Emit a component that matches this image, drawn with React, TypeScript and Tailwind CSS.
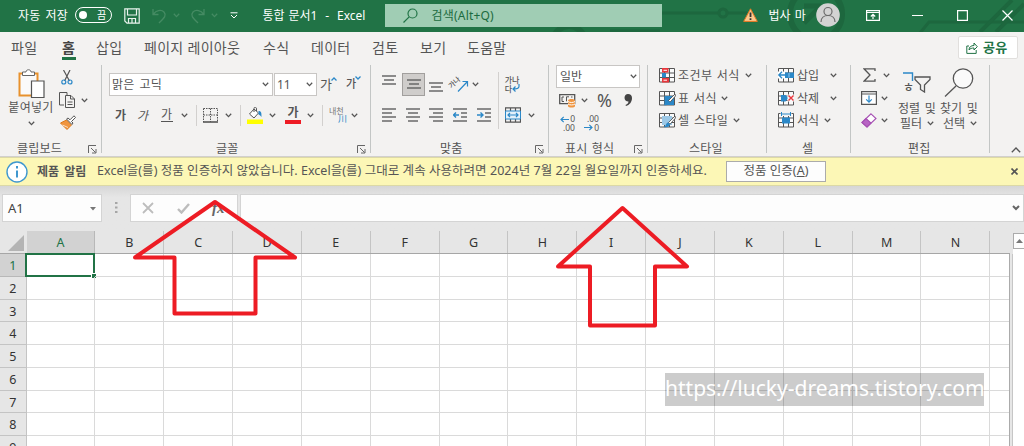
import type { ReactNode } from 'react';

const columns = ['A', 'B', 'C', 'D', 'E', 'F', 'G', 'H', 'I', 'J', 'K', 'L', 'M', 'N'];
const rows = [1, 2, 3, 4, 5, 6, 7, 8, 9];

// Ribbon tabs, each with the width of its slot
const tabs = [
  { label: '파일', slot: 'w-[51px]' },
  { label: '홈', slot: 'w-[34px]', active: true },
  { label: '삽입', slot: 'w-[48px]' },
  { label: '페이지 레이아웃', slot: 'w-[119px]' },
  { label: '수식', slot: 'w-[48px]' },
  { label: '데이터', slot: 'w-[61px]' },
  { label: '검토', slot: 'w-[48px]' },
  { label: '보기', slot: 'w-[47px]' },
  { label: '도움말', slot: 'w-[60px]' },
];

const Chevron = ({ className = '' }: { className?: string }) => (
  <svg viewBox="0 0 7 5" className={`w-[7px] h-[5px] shrink-0 ${className}`} fill="none" stroke="currentColor" strokeWidth="1.3">
    <path d="M.8.8 3.5 3.6 6.2.8" />
  </svg>
);

const Launcher = () => (
  <svg viewBox="0 0 9 9" className="w-[9px] h-[9px]" fill="none" stroke="#666" strokeWidth="1">
    <path d="M.5 8V.5H8M3 3l4.5 4.5M8 4v4H4" />
  </svg>
);

const Divider = ({ className = '' }: { className?: string }) => (
  <div className={`w-px shrink-0 bg-[#d2d0ce] ${className}`} />
);

// One ribbon group: controls on top, caption and dialog launcher below
const Group = ({ label, className, labelClass, launcher, children }: {
  label: string;
  className: string;
  labelClass: string;
  launcher?: boolean;
  children: ReactNode;
}) => (
  <div className={`flex flex-col shrink-0 h-full ${className}`}>
    <div className="flex h-[79px]">{children}</div>
    <div className="flex items-center h-[17px]">
      <div className={`flex-1 pt-[2px] text-[12px] leading-[17px] tracking-[0.2px] ${labelClass}`}>{label}</div>
      {launcher && <div className="w-[13px] pt-1"><Launcher /></div>}
    </div>
  </div>
);

const GroupEdge = () => <div className="w-px h-[88px] mt-[5px] shrink-0 bg-[#c3c6c5]" />;

const Lines = ({ kind }: { kind: 'left' | 'center' | 'right' | 'top' | 'middle' | 'bottom' }) => {
  const paths = {
    left: 'M0 1h14M0 5h10M0 9h14M0 13h10',
    center: 'M0 1h14M2 5h10M0 9h14M2 13h10',
    right: 'M0 1h14M4 5h10M0 9h14M4 13h10',
    top: 'M0 -1h14M2 3h10M0 7h14',
    middle: 'M0 3h14M2 7h10M0 11h14',
    bottom: 'M0 6h14M2 10h10M0 14h14',
  };
  return (
    <svg viewBox="0 0 14 14" className="w-[14px] h-[14px] overflow-visible" fill="none" stroke="#6a6a6a" strokeWidth="1.4">
      <path d={paths[kind]} />
    </svg>
  );
};

const Indent = ({ flip }: { flip?: boolean }) => (
  <svg viewBox="0 0 14 14" className="w-[14px] h-[14px]" fill="none" stroke="#6a6a6a" strokeWidth="1.4">
    <path d="M0 1h14M8 5h6M8 9h6M0 13h14" />
    <path d={flip ? 'M0 7h5.5M3.5 4.5 6 7 3.5 9.5' : 'M6 7H.8M3 4.5.5 7 3 9.5'} stroke="#2b88c8" />
  </svg>
);

const TableIcon = ({ kind }: { kind: 'cond' | 'table' | 'cell' | 'insert' | 'delete' | 'format' }) => (
  <svg viewBox="0 0 16 15" className="w-4 h-[15px] overflow-visible" fill="none">
    <path d="M.5.5h15v13.5H.5zM.5 5h15M.5 9.5h15M5.5.5V14M10.5.5V14" stroke="#555" fill="#fafafa" />
    {kind === 'cond' && (
      <>
        <path d="M3 0h6.5v4.5H3zM3 10h7v4.5H3z" fill="#e8383d" />
        <path d="M3 5h4v4.5H3z" fill="#2b88c8" />
        <path d="M4.5 2.3h3.5M4.5 12.2h3.5" stroke="#fff" />
      </>
    )}
    {(kind === 'table' || kind === 'cell') && (
      <>
        <path d={kind === 'table' ? 'M5.5 5H15v9H5.5z' : 'M3 3h10v9H3z'} fill={kind === 'table' ? '#2b88c8' : '#9cc8e6'} />
        <path d="M16 3 9.5 9.5l1.5 1.7L16.5 5z" fill="#fff" stroke="#444" strokeWidth=".8" />
        <path d="M9 9.5c-2 .3-1.5 3-4.5 4.5 3.5 1 6.5-.5 6.5-3z" fill="#2b88c8" />
      </>
    )}
    {kind === 'insert' && (
      <>
        <path d="M4 4.5h12v5.5H4z" fill="#2b88c8" />
        <path d="M11 5v4.5" stroke="#8ec3ea" />
        <path d="M0 3.5h7v7H0z" fill="#fff" />
        <path d="M8 7H1M4 3.8.8 7 4 10.2" stroke="#2b88c8" strokeWidth="1.3" />
      </>
    )}
    {kind === 'delete' && (
      <>
        <path d="M3 4h4.500L10.500 7.200 7.500 10.500H3z" fill="#2b88c8" />
        <path d="M9.5 3.5H16v7H9.5z" fill="#f8f8f8" />
        <path d="m10.5 4.500 5 5M15.500 4.500l-5 5" stroke="#e8383d" strokeWidth="1.4" />
      </>
    )}
    {kind === 'format' && (
      <>
        <path d="M2.500-1h11v4h-11z" fill="#f3f2f1" />
        <path d="M3.500 1h9M3.500-1v4M12.500-1v4" stroke="#2b88c8" />
        <path d="M4 4.500h8v6H4z" fill="#2b88c8" />
      </>
    )}
  </svg>
);

const TitleBar = () => (
  <header className="relative flex items-start h-8 bg-[#217346] text-white text-[12px] overflow-hidden">
    {/* circuit decoration */}
    <svg className="absolute inset-0 w-[1024px] h-8" fill="none" stroke="#1d673e" strokeWidth="3">
      <circle cx="569" cy="42" r="16" strokeWidth="6" />
      <path d="M610 31h50M662 13h58M727 13h20" />
      <circle cx="723" cy="13" r="4" />
      <circle cx="816" cy="14" r="26" strokeWidth="6" />
      <path d="M804 6h17M821 6l-17 17" strokeWidth="5" />
      <path d="M920 33l9-11h95" />
      <path d="m980 32 32-32M996 32l28-28" strokeWidth="4" />
    </svg>
    <div className="relative flex items-center h-[30px]">
      <div className="w-[57px] ml-[18px] pt-px tracking-[0.1px] [word-spacing:2px]">자동 저장</div>
      <div className="flex items-center w-[37px] h-[16px] -mt-px rounded-full border border-white pl-[3px]">
        <div className="w-2 h-2 rounded-full bg-white" />
        <div className="ml-[10px] text-[10px] leading-none">끔</div>
      </div>
      <svg viewBox="0 0 16 16" className="w-4 h-4 ml-3 mt-[2px]" fill="none" stroke="#e9f3ed" strokeWidth="1.2">
        <path d="M.8.8h14.400v14.400H3L.8 13zM3.500 1v6h9V1M4.500 15v-4.500h7V15M8 11v4" />
      </svg>
      <svg viewBox="0 0 15 16" className="w-[15px] h-4 ml-3 mt-[2px]" fill="none" stroke="#458b63" strokeWidth="1.3">
        <path d="M1 1v5.500h5.500M1.500 6C4 2.500 9 1 12 4c3 3.500 0 6-5 11" />
      </svg>
      <Chevron className="ml-[6px] text-[#458b63]" />
      <svg viewBox="0 0 15 16" className="w-[15px] h-4 ml-[10px] mt-[2px]" fill="none" stroke="#458b63" strokeWidth="1.3">
        <path d="M14 1v5.500H8.500M13.500 6C11 2.500 6 1 3 4c-3 3.500 0 6 5 11" />
      </svg>
      <Chevron className="ml-[6px] text-[#458b63]" />
      <svg viewBox="0 0 8 7" className="w-2 h-[7px] ml-[12px]" fill="none" stroke="#fff">
        <path d="M.5.8h7M1 3l3 3 3-3" />
      </svg>
      <div className="w-[122px] ml-[24.500px] pt-px whitespace-pre [word-spacing:0.8px]">통합 문서1  -  Excel</div>
    </div>
    <div className="relative flex items-center w-[277px] h-[23px] mt-[4px] shrink-0 bg-[#a0cdb4] text-[#1c6b40]">
      <svg viewBox="0 0 15 15" className="w-[15px] h-[15px] ml-[18px]" fill="none" stroke="#217346" strokeWidth="1.2">
        <circle cx="9.500" cy="5.500" r="4.500" />
        <path d="M6.200 8.800.5 14.500" />
      </svg>
      <div className="ml-[14px] tracking-[0.2px]">검색(Alt+Q)</div>
    </div>
    <div className="relative flex items-center h-[30px]">
      <svg viewBox="0 0 15 14" className="w-[15px] h-[14px] ml-[81px]">
        <path d="M7.500.8 14.300 13.400H.7z" fill="#fbc98d" stroke="#e87722" />
        <path d="M7.500 4.500v4.500M7.500 10.300v1.700" stroke="#333" strokeWidth="1.800" />
      </svg>
      <div className="w-12 ml-[11px] pt-px [word-spacing:1px]">법사 마</div>
      <svg viewBox="0 0 24 24" className="w-6 h-6 -ml-px shrink-0" fill="none" stroke="#6b6b6b" strokeWidth="1.200">
        <circle cx="12" cy="12" r="11.800" fill="#d3d3d3" stroke="none" />
        <circle cx="12" cy="8.500" r="4" />
        <path d="M5 19c0-4 3-6.500 7-6.500s7 2.500 7 6.500" />
      </svg>
      <svg viewBox="0 0 14 11" className="w-[14px] h-[11px] ml-[26px] shrink-0" fill="none" stroke="#fff" strokeWidth="1.200">
        <path d="M.6.6h12.800v9.800H.6zM.6 2.500h12.800M7 9V4.500M4.800 6.500 7 4.300l2.200 2.200" />
      </svg>
      <svg viewBox="0 0 11 11" className="w-[11px] h-[11px] ml-[32px] shrink-0" stroke="#fff"><path d="M0 5.500h11" /></svg>
      <svg viewBox="0 0 11 11" className="w-[11px] h-[11px] ml-[34px] shrink-0" fill="none" stroke="#fff" strokeWidth="1.200"><path d="M.6.6h9.800v9.800H.6z" /></svg>
      <svg viewBox="0 0 11 11" className="w-[11px] h-[11px] ml-[34px] shrink-0" stroke="#fff" strokeWidth="1.200"><path d="m.5.5 10 10M10.500.5l-10 10" /></svg>
    </div>
  </header>
);

const TabRow = () => (
  <nav className="flex h-7 pl-[11px] text-[14px] text-[#555] tracking-[0.3px]">
    {tabs.map((tab) => (
      <div key={tab.label} className={`shrink-0 ${tab.slot}`}>
        <div className={tab.active ? 'w-[14px] h-7 border-b-3 border-[#217346] font-bold text-[#444] leading-[31px] whitespace-nowrap' : 'leading-[31px] whitespace-nowrap'}>
          {tab.label}
        </div>
      </div>
    ))}
    <div className="flex items-center ml-auto mr-[6px] mt-[4px] w-[60px] h-[23px] pl-[7px] bg-white border border-[#e1dfdd] rounded-xs text-[#217346] font-bold text-[13px]">
      <svg viewBox="0 0 12 12" className="w-3 h-3 mr-[5px] shrink-0" fill="none" stroke="#217346">
        <path d="M3 4H.8v7.400h9.400V8M3 8c0-3 2-4.500 5-4.500V1l3.300 3.700L8 8V6C6 6 4 6.500 3 8z" />
      </svg>
      공유
    </div>
  </nav>
);

const Clipboard = () => (
  <Group label="클립보드" className="w-[101px]" labelClass="pl-[17px]" launcher>
    <div className="flex flex-col items-center w-[52px] ml-[5px] pt-[9px]">
      <svg viewBox="0 0 27 29" className="w-[27px] h-[29px] shrink-0" fill="none">
        <path d="M1.500 4.500h18v22H1.500z" fill="#fafafa" stroke="#e8912d" strokeWidth="2" />
        <path d="M4.500 6.500V3h3.500c0-3 5-3 5 0h3.500v3.500z" fill="#fff" stroke="#666" />
        <path d="M13.500 12h12.500v16.500H13.500z" fill="#fff" stroke="#555" strokeWidth="1.200" />
      </svg>
      <div className="mt-px text-[12px] leading-[18px] tracking-[0.3px] whitespace-nowrap">붙여넣기</div>
      <Chevron className="mt-[4px]" />
    </div>
    <div className="flex flex-col pt-[10px] ml-[4px]">
      <svg viewBox="0 0 12 15" className="w-3 h-[15px]" fill="none">
        <path d="M2.500 0 8.500 11M9 0 3.500 11" stroke="#555" strokeWidth="1.200" />
        <circle cx="2.800" cy="12" r="2" stroke="#2b88c8" strokeWidth="1.200" />
        <circle cx="9" cy="12" r="2" stroke="#2b88c8" strokeWidth="1.200" />
      </svg>
      <div className="flex items-center mt-[7px]">
        <svg viewBox="0 0 16 16" className="w-4 h-4 -ml-[2px]" fill="none" stroke="#555">
          <path d="M5 13H.5V.5H8V3M6.500 3.500h5.500l3.500 3.500v8.500h-9zM11.500 3.500V7h4M8.500 10h5M8.500 12.500h5" />
        </svg>
        <Chevron className="ml-[6px]" />
      </div>
      <svg viewBox="0 0 16 15" className="w-4 h-[15px] mt-[7px] -ml-px" fill="none">
        <path d="m.5 8 6-3 5 5L7 14.500z" fill="#f0953f" stroke="#dd7a1a" />
        <path d="M2.500 10 8 12.500" stroke="#fff" strokeWidth=".7" />
        <path d="m6.500 4 5.500 5.500 1-1.500-1.500-1.500 4-4L14 .8l-4 4L8 3z" fill="#fff" stroke="#555" />
      </svg>
    </div>
  </Group>
);

const FontGroup = () => (
  <Group label="글꼴" className="w-[268px]" labelClass="pl-[114px]" launcher>
    <div className="flex flex-col pl-[7px]">
      <div className="flex items-center h-6 mt-3">
        <div className="flex items-center w-[164px] h-[23px] pl-[2px] pr-[3px] pt-px bg-white border border-[#c8c6c4] text-[12px] tracking-[0.1px] [word-spacing:2px]">
          맑은 고딕
          <Chevron className="ml-auto" />
        </div>
        <div className="flex items-center w-[43px] h-[23px] ml-px pl-[2px] pr-[3px] pt-px bg-white border border-[#c8c6c4] text-[12px]">
          11
          <Chevron className="ml-auto" />
        </div>
        <div className="flex w-[26px] ml-[3px] text-[13px] leading-[18px]">
          가
          <svg viewBox="0 0 6 4" className="w-[6px] h-1 mt-[2px] -ml-[1px]" fill="none" stroke="#2b88c8" strokeWidth="1.300"><path d="m.5 3.500 2.500-2.500 2.500 2.500" /></svg>
        </div>
        <div className="flex text-[11px] font-medium leading-[20px]">
          가
          <svg viewBox="0 0 6 4" className="w-[6px] h-1 mt-[2px] -ml-[1px]" fill="none" stroke="#2b88c8" strokeWidth="1.300"><path d="m.5.5 2.500 2.500 2.500-2.500" /></svg>
        </div>
      </div>
      <div className="flex items-center h-[22px] mt-2 text-[12px] leading-[15px]">
        <div className="w-[22px] ml-[6px] font-bold">가</div>
        <div className="w-[24px] italic">가</div>
        <div className="w-[12px] border-b border-[#555] leading-[13px]">가</div>
        <Chevron className="ml-[8px]" />
        <Divider className="h-[21px] ml-[8px]" />
        <svg viewBox="0 0 15 15" className="w-[15px] h-[15px] ml-[6px]" fill="none" stroke="#555">
          <path d="M.5.5h14v13.500M.5.5V14M7.500.5V14M.5 7h14" strokeDasharray="1.500 1" />
          <path d="M0 14h15" strokeWidth="1.600" />
        </svg>
        <Chevron className="ml-[7px]" />
        <Divider className="h-[21px] ml-[8px]" />
        <svg viewBox="0 0 16 17" className="w-4 h-[17px] ml-[6px]" fill="none">
          <path d="M7 2 2.500 7l4.500 4L11.500 6zM7 5V1.500C7-.3 9.500-.3 9.500 2v2" stroke="#555" fill="#fff" />
          <path d="M11.500 4c3 0 3 2 3 6-1-1-1.500-2-3-2.500z" fill="#2b88c8" />
          <path d="M0 12.500h16V17H0z" fill="#ff0" />
        </svg>
        <Chevron className="ml-[6px]" />
        <div className="flex flex-col items-center w-4 ml-[9px]">
          <div className="text-[12px] leading-[12px] font-bold">가</div>
          <div className="w-4 h-1 mt-px bg-[#ee1c25]" />
        </div>
        <Chevron className="ml-[6px]" />
        <Divider className="h-[21px] ml-[8px]" />
        <div className="flex flex-col w-[18px] ml-[6px]">
          <div className="text-[8px] leading-[8px] text-[#777] whitespace-nowrap">내천</div>
          <div className="text-[9px] leading-[8px] text-[#2b88c8] self-end">川</div>
        </div>
        <Chevron className="ml-[4px]" />
      </div>
    </div>
  </Group>
);

const AlignGroup = () => (
  <Group label="맞춤" className="w-[177px]" labelClass="pl-[69px]" launcher>
    <div className="flex flex-col pl-[11px]">
      <div className="flex items-center h-6 mt-3">
        <Lines kind="top" />
        <div className="flex items-center justify-center w-[23px] h-[23px] ml-[6px] bg-[#cfcdcb] border border-[#a19f9d]"><div className="-mt-[1px]"><Lines kind="middle" /></div></div>
        <div className="ml-[4px]"><Lines kind="bottom" /></div>
        <svg viewBox="0 0 17 17" className="w-[17px] h-[17px] ml-[9px] overflow-visible" fill="none">
          <text x="-1" y="12" fontSize="7" fontWeight="500" fill="#555" transform="rotate(-42 0 12)">가나</text>
          <path d="M6 15.500 15 6M10.500 5.500H15.500V10.500" stroke="#2b88c8" strokeWidth="1.200" />
        </svg>
        <Chevron className="ml-[3px]" />
      </div>
      <div className="flex items-center h-[22px] mt-2 gap-[9.700px]">
        <Lines kind="left" />
        <Lines kind="center" />
        <Lines kind="right" />
        <Indent />
        <Indent flip />
      </div>
    </div>
    <Divider className="h-[57px] mt-3 ml-[7px]" />
    <div className="flex flex-col ml-[6px] pt-[15px]">
      <div className="w-[17px] h-[18px] text-[8px] leading-[9px] font-medium">
        <div className="whitespace-nowrap">가나</div>
        <div className="flex">
          다
          <svg viewBox="0 0 8 8" className="w-2 h-2" fill="none" stroke="#2b88c8" strokeWidth="1.200"><path d="M7 0v2.500Q7 5 1 5M3.500 2.500 1 5l2.500 2.500" /></svg>
        </div>
      </div>
      <div className="flex items-center mt-[14px]">
        <svg viewBox="0 0 16 16" className="w-4 h-4" fill="none">
          <path d="M.5.8h15v14.400H.5zM5.500 1v3M10.500 1v3M5.500 12v3M10.500 12v3" stroke="#555" strokeWidth="1.200" />
          <path d="M.5 4h15v8H.5z" fill="#e4f1fa" stroke="#2b88c8" />
          <path d="M3 8h10M5 6 3 8l2 2M11 6l2 2-2 2" stroke="#2b88c8" strokeWidth="1.200" />
        </svg>
        <Chevron className="ml-[7px]" />
      </div>
    </div>
  </Group>
);

const NumberGroup = () => (
  <Group label="표시 형식" className="w-[98px]" labelClass="pl-[16px] [word-spacing:1px]" launcher>
    <div className="flex flex-col pl-[7px]">
      <div className="flex items-center w-[84px] h-[23px] mt-[5px] pl-[3px] pr-[2px] bg-white border border-[#c8c6c4] text-[12px]">
        일반
        <Chevron className="ml-auto" />
      </div>
      <div className="flex items-center h-6 pl-[3px]">
        <svg viewBox="0 0 17 15" className="w-[17px] h-[15px]" fill="none">
          <path d="M.7 1.700h15v9H.7z" stroke="#555" strokeWidth="1.300" />
          <path d="M5 4H3v4.500h2M10 3.800H7.500v4.500M12 4h1.500" stroke="#555" />
          <path d="M9 7.500c0-2 7-2 7 0v5.500c0 2-7 2-7 0z" fill="#f0953f" />
          <path d="M9 8.500c1.500 1.300 5.500 1.300 7 0M9 11c1.500 1.300 5.500 1.300 7 0" stroke="#fff" />
        </svg>
        <Chevron className="ml-[5px]" />
        <div className="w-[27px] ml-[9px] text-[18px] leading-6 font-['Noto_Sans']">%</div>
        <svg viewBox="0 0 8 12" className="w-2 h-3" fill="#444"><path d="M4 0c2.500 0 4 1.500 4 4 0 4-2.500 7-6 8l-.5-1c2-1 3-2 3-3.500C2 7.500.5 6 .5 3.800.5 1.500 2 0 4 0z" /></svg>
      </div>
      <div className="flex h-[22px] pl-[3px] pt-[3px] text-[8.500px] leading-[8.500px] font-['Noto_Sans']">
        <div className="flex flex-col items-end w-4 mr-[8px]">
          <div className="flex items-center h-[8.500px]">
            <svg viewBox="0 0 10 7" className="w-[10px] h-[7px]" fill="none" stroke="#2b88c8" strokeWidth="1.200"><path d="M9 3.500H1M3.700.8 1 3.500l2.700 2.700" /></svg>0
          </div>
          <div>.00</div>
        </div>
        <div className="flex flex-col items-end w-4">
          <div>.00</div>
          <div className="flex items-center h-[8.500px]">
            <svg viewBox="0 0 10 7" className="w-[10px] h-[7px]" fill="none" stroke="#2b88c8" strokeWidth="1.200"><path d="M0 3.500h8M5.300.8 8 3.500 5.300 6.200" /></svg>0
          </div>
        </div>
      </div>
    </div>
  </Group>
);

const styleItems = [
  { label: '조건부 서식', kind: 'cond', slot: 'w-[67px]' },
  { label: '표 서식', kind: 'table', slot: 'w-[43px]' },
  { label: '셀 스타일', kind: 'cell', slot: 'w-[55px]' },
] as const;

const cellItems = [
  { label: '삽입', kind: 'insert', slot: 'w-[33px]' },
  { label: '삭제', kind: 'delete', slot: 'w-[33px]' },
  { label: '서식', kind: 'format', slot: 'w-[27px]' },
] as const;

const EditGroup = () => (
  <Group label="편집" className="w-[138px]" labelClass="pl-[57px]">
    <div className="flex flex-col pt-1 pl-[10px] w-[46px]">
      <div className="flex items-center h-[22.700px]">
        <svg viewBox="0 0 13 14" className="w-[13px] h-[14px] ml-[2px]" fill="none" stroke="#555" strokeWidth="1.300"><path d="M12 3V.8H1l6 6.200-6 6.200h11V11" /></svg>
        <Chevron className="ml-[7px]" />
      </div>
      <div className="flex items-center h-[22.700px]">
        <svg viewBox="0 0 16 14" className="w-4 h-[14px]" fill="none"><path d="M.6.6h14.800v12.800H.6zM.6 3h14.800" stroke="#555" strokeWidth="1.200" fill="#fff" /><path d="M8 4.500V11M5.200 8.300 8 11.100l2.800-2.800" stroke="#2b88c8" strokeWidth="1.200" /></svg>
        <Chevron className="ml-[4px]" />
      </div>
      <div className="flex items-center h-[22.700px]">
        <svg viewBox="0 0 16 15" className="w-4 h-[15px]" fill="#fff" stroke="#a64fb3" strokeWidth="1.100"><path d="M10 .8 15 5.500 6 14 1 9.500z" /><path d="M5 5.500 1 9.500 6 14l4-4z" fill="#b865c4" /></svg>
        <Chevron className="ml-[4px]" />
      </div>
    </div>
    <div className="flex flex-col w-[43px] pl-px pt-[12px] text-[12px] leading-[15px]">
      <div className="flex h-[29px] pl-[5px]">
        <div className="flex flex-col w-[11px] h-[22px] text-[12px] leading-[12px]">
          <svg viewBox="0 0 11 9" className="w-[11px] h-[9px] shrink-0" fill="none" stroke="#2b88c8" strokeWidth="1.400"><path d="M0 1h9.500v8" /></svg>
          <div className="mt-px font-medium">ㅎ</div>
        </div>
        <svg viewBox="0 0 17 17" className="w-[17px] h-[17px] mt-[4px]" fill="none" stroke="#555" strokeWidth="1.300"><path d="M1 1h15v2.500L10.500 9v7l-4-2.500V9L1 3.500z" /></svg>
      </div>
      <div className="whitespace-nowrap [word-spacing:1.500px]">정렬 및</div>
      <div className="flex items-center pl-[2px]">필터<Chevron className="ml-[5px]" /></div>
    </div>
    <div className="flex flex-col pt-[8px] w-[44px] text-[12px] leading-[15px]">
      <svg viewBox="0 0 30 30" className="w-[30px] h-[30px] ml-[4px] mb-[3px]" fill="none" stroke="#555" strokeWidth="1.300"><circle cx="19" cy="10.500" r="9.700" fill="#fafafa" /><path d="M12 18 1 28.500" /></svg>
      <div className="whitespace-nowrap [word-spacing:1.500px]">찾기 및</div>
      <div className="flex items-center pl-[3px]">선택<Chevron className="ml-[5px]" /></div>
    </div>
  </Group>
);

const Ribbon = () => (
  <div className="flex h-[97px] border-b border-[#d2d0ce] text-[#555]">
    <Clipboard />
    <GroupEdge />
    <FontGroup />
    <GroupEdge />
    <AlignGroup />
    <GroupEdge />
    <NumberGroup />
    <GroupEdge />
    <Group label="스타일" className="w-[118px]" labelClass="pl-[41px]">
      <div className="flex flex-col pt-1 pl-[11px]">
        {styleItems.map((item) => (
          <div key={item.label} className="flex items-center h-[22.700px] text-[12px]">
            <TableIcon kind={item.kind} />
            <div className={`ml-[3px] pt-px whitespace-nowrap tracking-[0.4px] [word-spacing:1px] ${item.slot}`}>{item.label}</div>
            <Chevron />
          </div>
        ))}
      </div>
    </Group>
    <GroupEdge />
    <Group label="셀" className="w-[83px]" labelClass="pl-[35px]">
      <div className="flex flex-col pt-1 pl-[11px]">
        {cellItems.map((item) => (
          <div key={item.label} className="flex items-center h-[22.700px] text-[12px]">
            <TableIcon kind={item.kind} />
            <div className={`ml-[3px] pt-px whitespace-nowrap ${item.slot}`}>{item.label}</div>
            <Chevron />
          </div>
        ))}
      </div>
    </Group>
    <GroupEdge />
    <EditGroup />
    <GroupEdge />
    <svg viewBox="0 0 10 6" className="w-[10px] h-[6px] ml-[21px] mt-[87px]" fill="none" stroke="#555" strokeWidth="1.300"><path d="m.8 5.200 4.200-4.200 4.200 4.200" /></svg>
  </div>
);

const Notice = () => (
  <div className="flex items-center h-[29px] bg-[#fcf7b6] border-y border-[#dcd9a6] text-[12.500px] text-[#555]">
    <svg viewBox="0 0 22 22" className="w-[22px] h-[22px] ml-[6px]" fill="none">
      <circle cx="11" cy="11" r="10" fill="#fff" stroke="#3f97cf" strokeWidth="1.400" />
      <path d="M11 9.500v7M11 5v2.500" stroke="#3f97cf" strokeWidth="2" />
    </svg>
    <div className="w-[60px] ml-[9px] text-[12px] font-bold [word-spacing:2px]">제품 알림</div>
    <div className="w-[629px] whitespace-nowrap tracking-[0.040px]">
      Excel을(를) 정품 인증하지 않았습니다. Excel을(를) 그대로 계속 사용하려면 2024년 7월 22일 월요일까지 인증하세요.
    </div>
    <button className="w-[100px] h-[21px] bg-[#fdfdfd] border border-[#ababab] leading-none">
      정품 인증(<span className="underline">A</span>)
    </button>
    <svg viewBox="0 0 7 7" className="w-[7px] h-[7px] ml-auto mr-[6px]" stroke="#555" strokeWidth="1.600"><path d="m.5.5 6 6M6.500.5l-6 6" /></svg>
  </div>
);

const FormulaBar = () => (
  <div className="flex items-start h-[45px] pt-[8px] pl-[2px] bg-linear-to-b from-[#d6d6d6] to-[#e6e6e6] to-25%">
    <div className="flex items-center w-[100px] h-[28px] pl-[5px] pr-[5px] pt-px bg-[#fdfdfd] border border-[#d4d4d4] text-[13px] text-[#444]">
      A1
      <svg viewBox="0 0 6 4" className="w-[6px] h-1 ml-auto" fill="#777"><path d="M0 0h6L3 3.500z" /></svg>
    </div>
    <svg viewBox="0 0 3 11" className="w-[3px] h-[11px] ml-[13px] mt-[8px]" fill="#a6a6a6"><path d="M0 0h2.500v2H0zM0 4.500h2.500v2H0zM0 9h2.500v2H0z" /></svg>
    <div className="flex items-center w-[108px] h-[28px] ml-[12px] bg-[#fdfdfd] border border-[#d4d4d4]">
      <svg viewBox="0 0 12 12" className="w-3 h-3 ml-[11px]" stroke="#bdbdbd" strokeWidth="1.800"><path d="m1 1 10 10M11 1 1 11" /></svg>
      <svg viewBox="0 0 13 11" className="w-[13px] h-[11px] ml-[23px]" fill="none" stroke="#bdbdbd" strokeWidth="2.400"><path d="m1 6 3.500 3.500L12 1" /></svg>
      <div className="ml-[22px] text-[15px] font-bold italic font-['Liberation_Serif'] text-[#666]">fx</div>
    </div>
    <div className="flex items-center w-[785px] h-[28px] ml-[2px] pr-[3px] bg-[#fdfdfd] border border-[#d4d4d4]">
      <svg viewBox="0 0 8 6" className="w-2 h-[6px] ml-auto" fill="none" stroke="#666" strokeWidth="2"><path d="m1 1 3 3 3-3" /></svg>
    </div>
  </div>
);

const Sheet = () => (
  <div className="flex h-[215px] bg-[#e6e6e6]">
    <div className="w-[1010px] shrink-0 overflow-hidden">
      <div className="flex h-[23px] border-b border-[#a6a6a6] text-[12.500px] text-[#333]">
        <div className="w-[26.500px] shrink-0">
          <svg viewBox="0 0 16 16" className="w-4 h-4 ml-[8px] mt-[4px]" fill="#b4b4b4"><path d="M16 0v16H0z" /></svg>
        </div>
        {columns.map((name) => (
          <div
            key={name}
            className={name === 'A'
              ? 'w-[68.850px] shrink-0 text-center leading-[23px] bg-[#d2d2d2] text-[#217346] border-r border-[#b8b8b8]'
              : 'w-[68.850px] shrink-0 text-center leading-[23px] border-r border-[#c4c4c4]'}
          >
            {name}
          </div>
        ))}
      </div>
      {rows.map((row) => (
        <div key={row} className="flex h-[22.750px] bg-white border-r border-[#ababab]">
          <div
            className={row === 1
              ? 'w-[26.500px] shrink-0 text-center text-[12.500px] leading-[24px] bg-[#d2d2d2] text-[#217346] border-b border-r border-[#b8b8b8]'
              : 'w-[26.500px] shrink-0 text-center text-[12.500px] leading-[24px] bg-[#e6e6e6] text-[#333] border-b border-r border-[#c4c4c4]'}
          >
            {row}
          </div>
          {columns.map((name) => (
            <div key={name} className="relative w-[68.850px] shrink-0 border-r border-b border-[#dadada]">
              {/* active cell frame with its fill handle */}
              {name === 'A' && row === 1 && (
                <>
                  <div className="absolute -left-[2px] -top-px -right-px -bottom-px border-2 border-[#217346]" />
                  <div className="absolute -right-[2px] -bottom-[2px] w-1 h-1 bg-[#217346] outline outline-white" />
                </>
              )}
            </div>
          ))}
          <div className="grow border-b border-[#dadada]" />
        </div>
      ))}
    </div>
    <div className="w-[3px] shrink-0 mt-[23px] border-r border-[#c6c6c6]" />
    <div className="grow">
      <div className="flex items-center justify-center h-[16px] mt-[2px] bg-[#fdfdfd] border border-r-0 border-[#ababab]">
        <svg viewBox="0 0 7 4" className="w-[7px] h-1" fill="#777"><path d="M0 4h7L3.500 0z" /></svg>
      </div>
      <div className="h-full bg-white" />
    </div>
  </div>
);

const App = () => {
  return (
    <div className="relative w-[1024px] h-[446px] overflow-hidden bg-[#f3f2f1] font-['Noto_Sans','Noto_Sans_CJK_KR',sans-serif]">
      <TitleBar />
      <TabRow />
      <Ribbon />
      <Notice />
      <FormulaBar />
      <Sheet />

      {/* hand-drawn arrows over the window */}
      <svg className="absolute inset-0 w-[1024px] h-[446px]" fill="none" stroke="#ed1c24" strokeWidth="4">
        <path d="M215 202 295 257.500H255.500V313.500H174.500V257.500H135z" strokeLinejoin="round" />
        <path d="M622.500 208 687 266.500H655V325.500H590V266.500H558z" strokeLinejoin="round" />
      </svg>
      <div className="absolute left-[665px] top-[373px] w-[319px] h-[33px] bg-black/20 text-white text-[21px] leading-[30px] text-center whitespace-nowrap">
        https://lucky-dreams.tistory.com
      </div>
    </div>
  );
};

export default App;
